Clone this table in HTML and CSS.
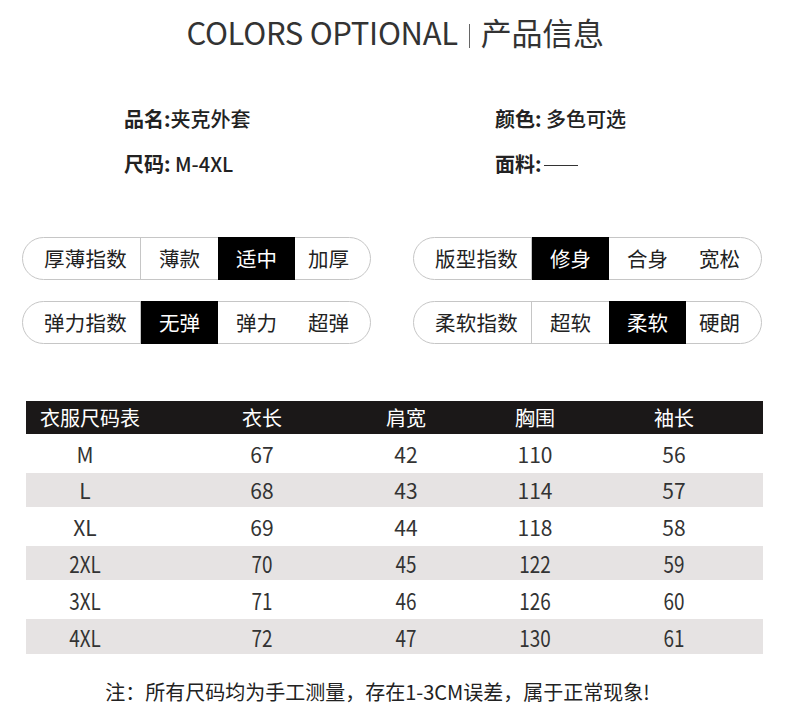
FILE: index.html
```html
<!DOCTYPE html>
<html lang="zh">
<head>
<meta charset="utf-8">
<title>产品信息</title>
<link rel="stylesheet" href="styles.css">
</head>
<body>
<div class="page">
  <h1 class="title">COLORS OPTIONAL<span class="title-sep"></span>产品信息</h1>

  <div class="info">
    <div class="info-item"><b>品名:</b><span>夹克外套</span></div>
    <div class="info-item"><b>颜色:</b> <span>多色可选</span></div>
    <div class="info-item"><b>尺码:</b> <span>M-4XL</span></div>
    <div class="info-item"><b>面料:</b><span class="dash"></span></div>
  </div>

  <div class="pills">
    <div class="pill">
      <span class="pill-label">厚薄指数</span>
      <span class="opt">薄款</span>
      <span class="opt active">适中</span>
      <span class="opt">加厚</span>
    </div>
    <div class="pill">
      <span class="pill-label">版型指数</span>
      <span class="opt active">修身</span>
      <span class="opt">合身</span>
      <span class="opt">宽松</span>
    </div>
    <div class="pill">
      <span class="pill-label">弹力指数</span>
      <span class="opt active">无弹</span>
      <span class="opt">弹力</span>
      <span class="opt">超弹</span>
    </div>
    <div class="pill">
      <span class="pill-label">柔软指数</span>
      <span class="opt">超软</span>
      <span class="opt active">柔软</span>
      <span class="opt">硬朗</span>
    </div>
  </div>

  <div class="size-table">
    <div class="tr th">
      <span class="first">衣服尺码表</span><span>衣长</span><span>肩宽</span><span>胸围</span><span>袖长</span>
    </div>
    <div class="tr odd"><span>M</span><span>67</span><span>42</span><span>110</span><span>56</span></div>
    <div class="tr even"><span>L</span><span>68</span><span>43</span><span>114</span><span>57</span></div>
    <div class="tr odd"><span>XL</span><span>69</span><span>44</span><span>118</span><span>58</span></div>
    <div class="tr even narrow"><span>2XL</span><span>70</span><span>45</span><span>122</span><span>59</span></div>
    <div class="tr odd narrow"><span>3XL</span><span>71</span><span>46</span><span>126</span><span>60</span></div>
    <div class="tr even narrow last"><span>4XL</span><span>72</span><span>47</span><span>130</span><span>61</span></div>
  </div>

  <p class="note">注：所有尺码均为手工测量，存在1-3CM误差，属于正常现象!</p>
</div>
</body>
</html>
```

FILE: styles.css
```css
* { box-sizing: border-box; }

html, body {
  margin: 0;
  padding: 0;
  background: #ffffff;
}

body {
  font-family: "Noto Sans CJK SC", "Noto Sans", sans-serif;
  color: #222;
}

.page {
  width: 790px;
  height: 724px;
  overflow: hidden;
}

.title {
  margin: 0;
  padding-top: 12px;
  height: 53px;
  line-height: 40px;
  font-size: 31px;
  font-weight: 400;
  color: #333;
  text-align: center;
  letter-spacing: -0.3px;
}

.title-sep {
  display: inline-block;
  width: 1px;
  height: 24px;
  background: #666;
  margin: 0 11px 0 11px;
  vertical-align: -3px;
}

.info {
  margin-top: 43px;
  display: grid;
  grid-template-columns: 371px 1fr;
  padding-left: 124px;
}

.info-item {
  height: 45px;
  line-height: 45px;
  font-size: 20px;
  color: #222;
  font-weight: 500;
}

.info-item b {
  font-weight: 700;
}

.dash {
  display: inline-block;
  width: 34px;
  height: 1.5px;
  background: #333;
  vertical-align: 6px;
  margin-left: 2px;
}

.pills {
  margin-top: 51px;
  padding-left: 22px;
  display: grid;
  grid-template-columns: 349px 349px;
  column-gap: 42px;
  row-gap: 21px;
}

.pill {
  display: flex;
  height: 43px;
  border: 1px solid #c6c6c6;
  border-radius: 22px;
  font-size: 20.5px;
  color: #222;
}

.pill-label {
  width: 118px;
  flex: none;
  border-right: 1px solid #c6c6c6;
  display: flex;
  align-items: center;
  justify-content: center;
  padding-left: 8px;
  padding-bottom: 1px;
  letter-spacing: 0.3px;
}

.opt {
  width: 77px;
  flex: none;
  display: flex;
  align-items: center;
  justify-content: center;
  padding-bottom: 1px;
}

.opt:last-child {
  width: auto;
  flex: 1;
  padding-right: 8px;
}

.opt.active {
  background: #000;
  color: #fff;
  margin: -1px 0;
}

.size-table {
  margin: 57px 0 0 26px;
  width: 737px;
}

.tr {
  display: grid;
  grid-template-columns: 118px 236px 52px 206px 72px 1fr;
  align-items: center;
  height: 39px;
  font-size: 21px;
  color: #333;
}

.tr span {
  text-align: center;
  white-space: nowrap;
}

.tr.narrow span {
  display: inline-block;
  transform: scale(0.9, 1.1);
}

.tr.th {
  height: 33px;
  background: #1b1818;
  color: #fff;
  font-size: 20px;
}

.tr.th .first {
  text-align: left;
  padding-left: 14px;
}

.tr.even {
  height: 34px;
  background: #e6e3e3;
}

.tr.last {
  height: 35px;
}

.note {
  margin: 23px 0 0;
  line-height: 30px;
  font-size: 20px;
  color: #222;
  text-align: center;
  padding-right: 35px;
}
```
